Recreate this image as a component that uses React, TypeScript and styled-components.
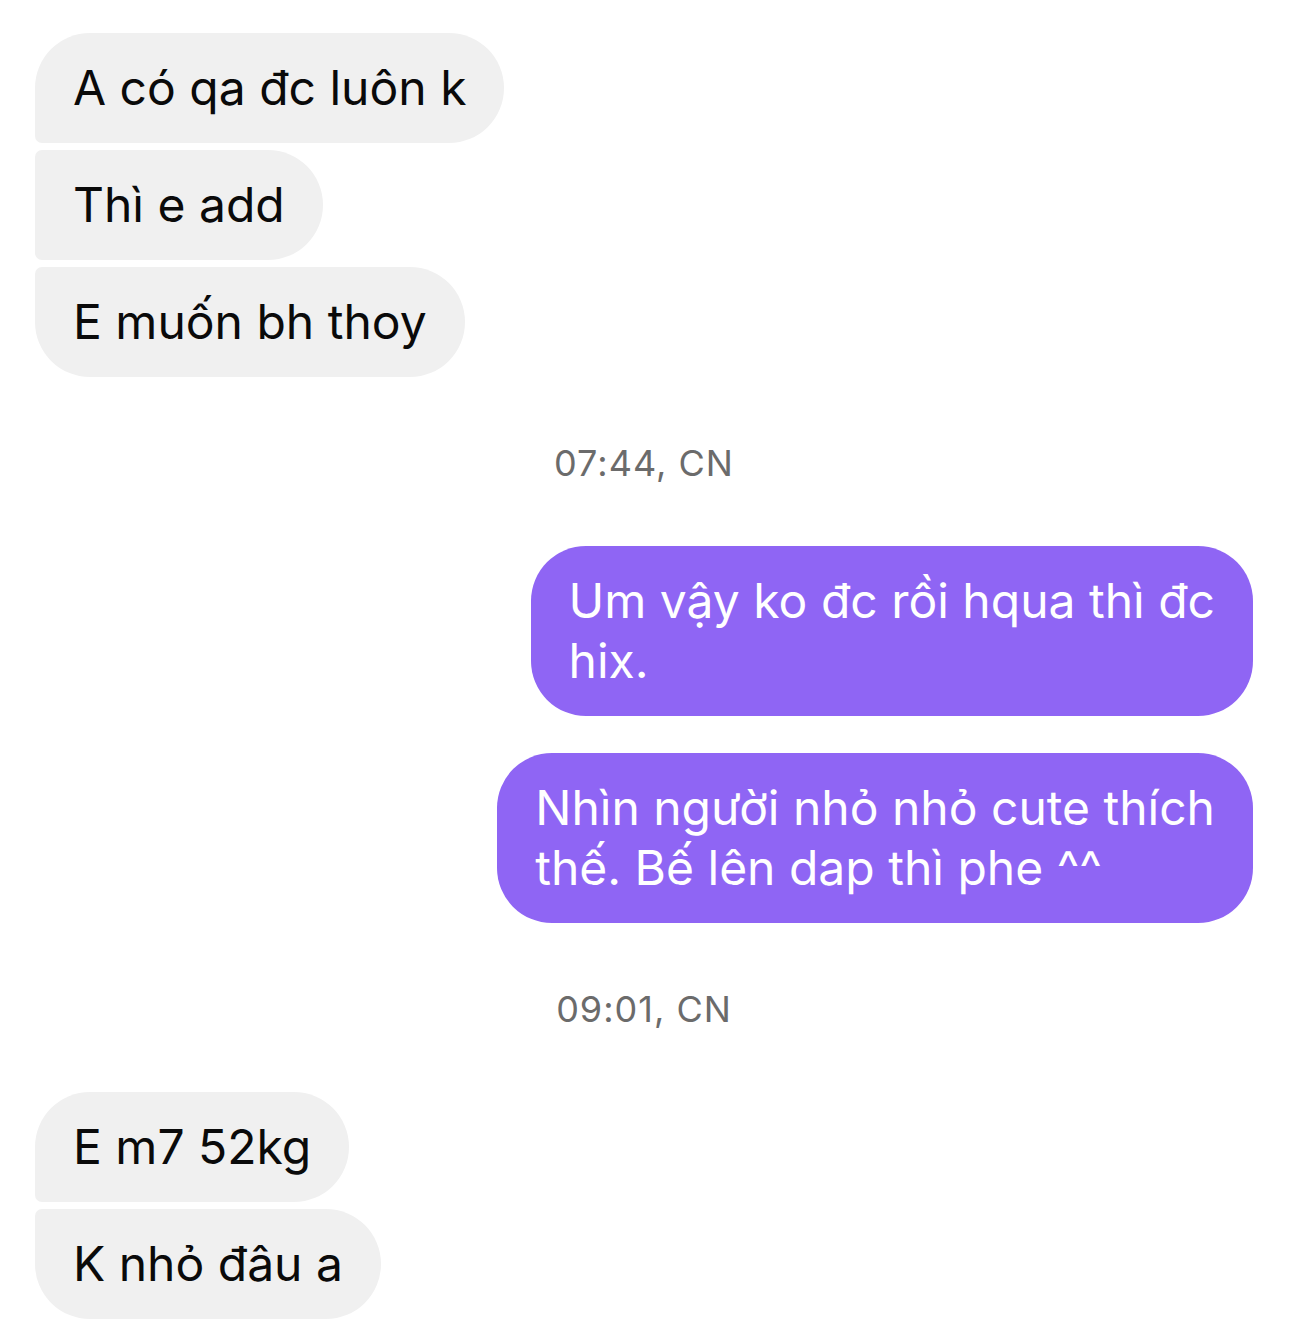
import React from 'react'
import styled, { createGlobalStyle } from 'styled-components'

const GlobalStyle = createGlobalStyle`
  html, body {
    margin: 0;
    padding: 0;
    background: #ffffff;
  }
  body {
    font-family: Inter, "Noto Sans", "Liberation Sans", sans-serif;
  }
`

type Side = 'in' | 'out'
type Pos = 'first' | 'middle' | 'last' | 'single'

interface Message {
  kind: 'msg'
  side: Side
  pos: Pos
  lines: string[]
}

interface Stamp {
  kind: 'time'
  text: string
}

type Item = Message | Stamp

const items: Item[] = [
  { kind: 'msg', side: 'in', pos: 'first', lines: ['A có qa đc luôn k'] },
  { kind: 'msg', side: 'in', pos: 'middle', lines: ['Thì e add'] },
  { kind: 'msg', side: 'in', pos: 'last', lines: ['E muốn bh thoy'] },
  { kind: 'time', text: '07:44, CN' },
  { kind: 'msg', side: 'out', pos: 'single', lines: ['Um vậy ko đc rồi hqua thì đc', 'hix.'] },
  { kind: 'msg', side: 'out', pos: 'single', lines: ['Nhìn người nhỏ nhỏ cute thích', 'thế. Bế lên dap thì phe ^^'] },
  { kind: 'time', text: '09:01, CN' },
  { kind: 'msg', side: 'in', pos: 'first', lines: ['E m7 52kg'] },
  { kind: 'msg', side: 'in', pos: 'last', lines: ['K nhỏ đâu a'] },
]

const Thread = styled.div`
  display: flex;
  flex-direction: column;
  padding: 33px 36px 0 35px;
`

const Row = styled.div<{ $side: Side; $gap: number }>`
  display: flex;
  justify-content: ${(p) => (p.$side === 'out' ? 'flex-end' : 'flex-start')};
  margin-top: ${(p) => p.$gap}px;
`

const BIG = 55
const SMALL = 7

const radius = (side: Side, pos: Pos) => {
  if (side === 'out') return `${BIG}px`
  const tl = pos === 'first' || pos === 'single' ? BIG : SMALL
  const bl = pos === 'last' || pos === 'single' ? BIG : SMALL
  return `${tl}px ${BIG}px ${BIG}px ${bl}px`
}

const Bubble = styled.div<{ $side: Side; $pos: Pos }>`
  width: fit-content;
  padding: 25px 38px;
  border-radius: ${(p) => radius(p.$side, p.$pos)};
  background: ${(p) => (p.$side === 'out' ? '#8f65f4' : '#f0f0f0')};
  color: ${(p) => (p.$side === 'out' ? '#ffffff' : '#0a0a0a')};
  font-size: 48px;
  line-height: 60px;
  white-space: nowrap;
`

const Line = styled.span`
  display: block;
`

const TimeLabel = styled.div`
  text-align: center;
  color: #6b6b6b;
  font-size: 36px;
  letter-spacing: 1px;
  line-height: 44px;
  margin: 64px 0 61px;
`

export default function App() {
  return (
    <>
      <GlobalStyle />
      <Thread>
        {items.map((it, i) => {
          if (it.kind === 'time') return <TimeLabel key={i}>{it.text}</TimeLabel>
          const prev = items[i - 1]
          const gap = !prev || prev.kind === 'time' ? 0 : prev.side === it.side && it.pos !== 'single' ? 7 : 37
          return (
            <Row key={i} $side={it.side} $gap={gap}>
              <Bubble $side={it.side} $pos={it.pos}>
                {it.lines.map((l, j) => (
                  <Line key={j}>{l}</Line>
                ))}
              </Bubble>
            </Row>
          )
        })}
      </Thread>
    </>
  )
}
